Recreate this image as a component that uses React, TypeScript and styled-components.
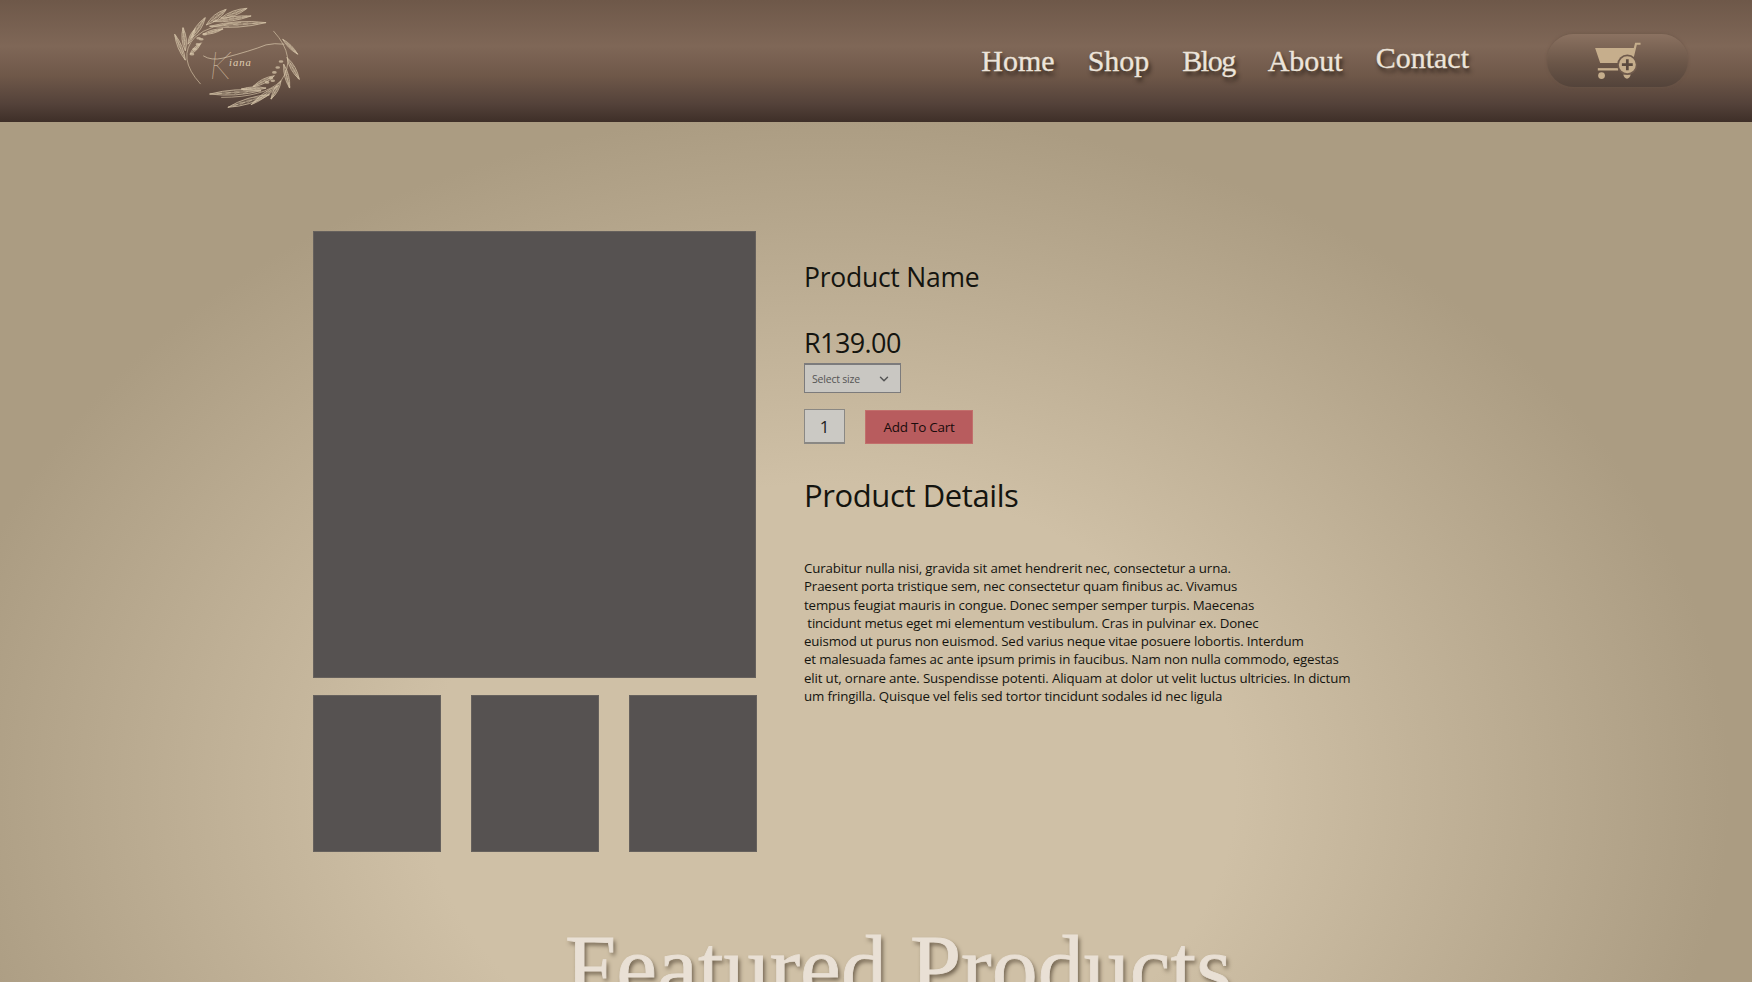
import React from "react";
import styled, { createGlobalStyle } from "styled-components";
import { ChevronDown } from "lucide-react";

const GlobalStyle = createGlobalStyle`
  html {
    scrollbar-width: none;
  }
  body {
    margin: 0;
    font-family: "Open Sans", "Noto Sans", sans-serif;
    background: #ab9c82;
  }
`;

const Page = styled.div`
  min-height: 982px;
  background: radial-gradient(
    ellipse 900px 680px at 830px 790px,
    #cfc0a6 0%,
    #cfc0a6 45%,
    #ab9c82 100%
  );
`;

const Header = styled.header`
  height: 122px;
  display: flex;
  align-items: center;
  padding: 0 64px 0 173px;
  background: linear-gradient(
    180deg,
    #6e5849 0%,
    #7f6757 38%,
    #6f5849 62%,
    #54423a 85%,
    #3e2f28 100%
  );
`;

const LogoSlot = styled.div`
  display: flex;
  margin-bottom: 8px;
`;

const Nav = styled.nav`
  margin-left: auto;
  display: flex;
  align-items: center;
  gap: 33px;
  margin-right: 78px;
`;

const NavLink = styled.a<{ $raised?: boolean; $tracking?: string }>`
  font-family: "Liberation Serif", serif;
  font-size: 30px;
  line-height: 36px;
  color: #ece4da;
  -webkit-text-stroke: 0.3px #ece4da;
  letter-spacing: ${(p) => p.$tracking || "0"};
  text-shadow: 2px 4px 4px #2b2019;
  margin-bottom: ${(p) => (p.$raised ? "6px" : "0")};
`;

const CartButton = styled.button`
  width: 141px;
  height: 53px;
  border: none;
  padding: 0;
  border-radius: 27px;
  display: flex;
  align-items: center;
  justify-content: center;
  background: linear-gradient(180deg, #8b7261 0%, #6b5648 55%, #53433a 100%);
  box-shadow: 0 0 3px #6a5547;
  margin-bottom: 1px;
`;

const Main = styled.main`
  display: flex;
  gap: 47px;
  padding: 109px 0 0 313px;
`;

const Gallery = styled.div`
  width: 444px;
  display: flex;
  flex-direction: column;
  gap: 17px;
`;

const MainImage = styled.div`
  width: 443px;
  height: 447px;
  background: #565251;
  box-shadow: inset 0 0 0 1px #66615d;
`;

const ThumbRow = styled.div`
  display: flex;
  justify-content: space-between;
`;

const Thumb = styled.div`
  width: 128px;
  height: 157px;
  background: #565251;
  box-shadow: inset 0 0 0 1px #66615d;
`;

const Details = styled.div`
  padding-top: 28px;
  color: #14140f;
`;

const Name = styled.h2`
  margin: 0;
  font-weight: 400;
  font-size: 26.5px;
  line-height: 36px;
  letter-spacing: -0.25px;
`;

const Price = styled.div`
  margin-top: 30px;
  font-size: 27px;
  line-height: 36px;
  letter-spacing: -0.6px;
`;

const SelectWrap = styled.div`
  position: relative;
  width: 97px;
  height: 30px;
  margin-top: 2px;
  color: #555;
`;

const SizeSelect = styled.select`
  appearance: none;
  width: 100%;
  height: 100%;
  box-sizing: border-box;
  padding: 0 0 0 7px;
  font-family: inherit;
  font-size: 10.5px;
  letter-spacing: -0.2px;
  color: #555;
  background: #c9c7c2;
  border: 1px solid #7c7b7c;
  border-top-width: 2px;
  border-radius: 0;
`;

const Chevron = styled(ChevronDown)`
  position: absolute;
  right: 10px;
  top: 9px;
  pointer-events: none;
`;

const BuyRow = styled.div`
  display: flex;
  align-items: center;
  gap: 20px;
  margin-top: 16px;
`;

const Qty = styled.input`
  width: 41px;
  height: 35px;
  box-sizing: border-box;
  text-align: center;
  font-family: inherit;
  font-size: 17px;
  color: #222;
  background: #cbc9c4;
  border: 2px solid #8a8884;
  border-width: 1px 1px 2px 1px;
  padding: 0;
`;

const AddButton = styled.button`
  width: 108px;
  height: 34px;
  background: #b85c5e;
  border: 1px solid #c26f6c;
  padding: 0;
  font-family: inherit;
  font-size: 13.5px;
  letter-spacing: -0.25px;
  color: #1a0c0c;
`;

const DetailsTitle = styled.h2`
  margin: 30px 0 0;
  font-weight: 400;
  font-size: 31px;
  line-height: 42px;
  letter-spacing: -0.4px;
`;

const Body = styled.p`
  margin: 43px 0 0;
  font-size: 13.3px;
  line-height: 18.25px;
  letter-spacing: -0.15px;
  white-space: pre;
`;

const Featured = styled.h1`
  margin: 62px 0 0;
  text-align: center;
  font-family: "Liberation Serif", serif;
  font-weight: 400;
  font-size: 92px;
  line-height: 106px;
  color: #e9e0d5;
  -webkit-text-stroke: 0.8px #e9e0d5;
  text-shadow: 2px 3px 4px #6d5f4c;
  padding-left: 45px;
`;

const leaves = [
  // upper left branch
  [195, 72, 255, 25, 16],
  [238, 52, 318, 22, 14],
  [205, 76, 375, 65, 16],
  [215, 62, 330, 45, 12],
  [185, 100, 245, 84, 10],
  [150, 112, 192, 50, 15],
  [132, 150, 125, 80, 13],
  [132, 178, 100, 100, 12],
  [146, 160, 178, 128, 10],
  [140, 130, 160, 85, 10],
  // lower right branch
  [425, 115, 470, 160, 9],
  [438, 170, 475, 236, 13],
  [428, 190, 446, 262, 12],
  [360, 270, 205, 280, 15],
  [385, 282, 260, 320, 16],
  [400, 225, 335, 258, 13],
  [420, 240, 390, 295, 12],
  [375, 262, 300, 265, 10],
  [410, 255, 330, 312, 12],
];

const seeds = [
  [160, 145], [170, 130], [180, 115], [190, 100], [172, 112], [152, 160],
  [410, 200], [400, 215], [390, 232], [378, 245], [420, 182], [395, 240],
];

function leafPath(x1: number, y1: number, x2: number, y2: number, w: number) {
  const mx = (x1 + x2) / 2;
  const my = (y1 + y2) / 2;
  const len = Math.hypot(x2 - x1, y2 - y1);
  const nx = (-(y2 - y1) / len) * w;
  const ny = ((x2 - x1) / len) * w;
  return `M${x1} ${y1}Q${mx + nx} ${my + ny} ${x2} ${y2}Q${mx - nx} ${my - ny} ${x1} ${y1}Z`;
}

// side veins running from the midrib towards the tip of a leaf
function veinPath(x1: number, y1: number, x2: number, y2: number, w: number) {
  const len = Math.hypot(x2 - x1, y2 - y1);
  const ux = (x2 - x1) / len;
  const uy = (y2 - y1) / len;
  let d = "";
  for (const t of [0.25, 0.42, 0.59, 0.76]) {
    const bx = x1 + (x2 - x1) * t;
    const by = y1 + (y2 - y1) * t;
    const tx = bx + ux * 16;
    const ty = by + uy * 16;
    const side = w * 0.36 * (1.2 - t);
    d += `M${bx} ${by}L${tx - uy * side} ${ty + ux * side}M${bx} ${by}L${tx + uy * side} ${ty - ux * side}`;
  }
  return d;
}

function Logo() {
  return (
    <svg width="128" height="103" viewBox="95 15 385 310" fill="none" stroke="#d6c4a8">
      <path d="M178 250Q105 170 160 110Q205 68 300 65" strokeWidth="2" />
      <path d="M397 90Q470 170 420 240Q370 290 240 290" strokeWidth="2" />
      {leaves.map(([x1, y1, x2, y2, w], i) => (
        <g key={i}>
          <path d={leafPath(x1, y1, x2, y2, w)} strokeWidth="2.2" fill="#d6c4a8" fillOpacity="0.16" />
          <path d={`M${x1} ${y1}L${x2} ${y2}`} strokeWidth="1.6" />
          <path d={veinPath(x1, y1, x2, y2, w)} strokeWidth="1.2" />
        </g>
      ))}
      {seeds.map(([x, y], i) => (
        <ellipse key={i} cx={x} cy={y} rx="7" ry="4" fill="#d6c4a8" fillOpacity="0.75" stroke="none" />
      ))}
      <path d="M186 165Q210 180 245 172Q330 150 375 132Q400 126 430 130" strokeWidth="2.2" />
      <text x="205" y="236" fill="#e0cfb4" stroke="none" fontFamily="Lato, Liberation Sans, sans-serif" fontStyle="italic" fontWeight="100" fontSize="112">
        K
        <tspan dx="-5" dy="-40" fontFamily="Liberation Serif, serif" fontSize="32" letterSpacing="3">
          iana
        </tspan>
      </text>
    </svg>
  );
}

function CartIcon() {
  return (
    <svg width="46" height="38" viewBox="225 60 135 112">
      <path fill="#c6ae8c" d="M225 78H339L343 62H359V68H348L335 122H240Z" />
      <rect x="233" y="137" width="60" height="7" fill="#c6ae8c" />
      <circle cx="244" cy="159" r="10" fill="#c6ae8c" />
      <path fill="#c6ae8c" d="M308 156H330Q327 168 319 168Q311 168 308 156Z" />
      <circle cx="320" cy="127" r="30" fill="#6f5a4c" />
      <circle cx="320" cy="127" r="25" fill="#c6ae8c" />
      <path fill="#5b4a3e" d="M316 111H324V123H336V131H324V143H316V131H304V123H316Z" />
    </svg>
  );
}

const bodyText = `Curabitur nulla nisi, gravida sit amet hendrerit nec, consectetur a urna.
Praesent porta tristique sem, nec consectetur quam finibus ac. Vivamus
tempus feugiat mauris in congue. Donec semper semper turpis. Maecenas
 tincidunt metus eget mi elementum vestibulum. Cras in pulvinar ex. Donec
euismod ut purus non euismod. Sed varius neque vitae posuere lobortis. Interdum
et malesuada fames ac ante ipsum primis in faucibus. Nam non nulla commodo, egestas
elit ut, ornare ante. Suspendisse potenti. Aliquam at dolor ut velit luctus ultricies. In dictum
um fringilla. Quisque vel felis sed tortor tincidunt sodales id nec ligula`;

export default function App() {
  return (
    <Page>
      <GlobalStyle />
      <Header>
        <LogoSlot>
          <Logo />
        </LogoSlot>
        <Nav>
          <NavLink>Home</NavLink>
          <NavLink>Shop</NavLink>
          <NavLink $tracking="-1.5px">Blog</NavLink>
          <NavLink>About</NavLink>
          <NavLink $raised>Contact</NavLink>
        </Nav>
        <CartButton aria-label="Cart">
          <CartIcon />
        </CartButton>
      </Header>
      <Main>
        <Gallery>
          <MainImage />
          <ThumbRow>
            <Thumb />
            <Thumb />
            <Thumb />
          </ThumbRow>
        </Gallery>
        <Details>
          <Name>Product Name</Name>
          <Price>R139.00</Price>
          <SelectWrap>
            <SizeSelect defaultValue="">
              <option value="">Select size</option>
            </SizeSelect>
            <Chevron size={14} strokeWidth={2.5} />
          </SelectWrap>
          <BuyRow>
            <Qty defaultValue="1" />
            <AddButton>Add To Cart</AddButton>
          </BuyRow>
          <DetailsTitle>Product Details</DetailsTitle>
          <Body>{bodyText}</Body>
        </Details>
      </Main>
      <Featured>Featured Products</Featured>
    </Page>
  );
}
